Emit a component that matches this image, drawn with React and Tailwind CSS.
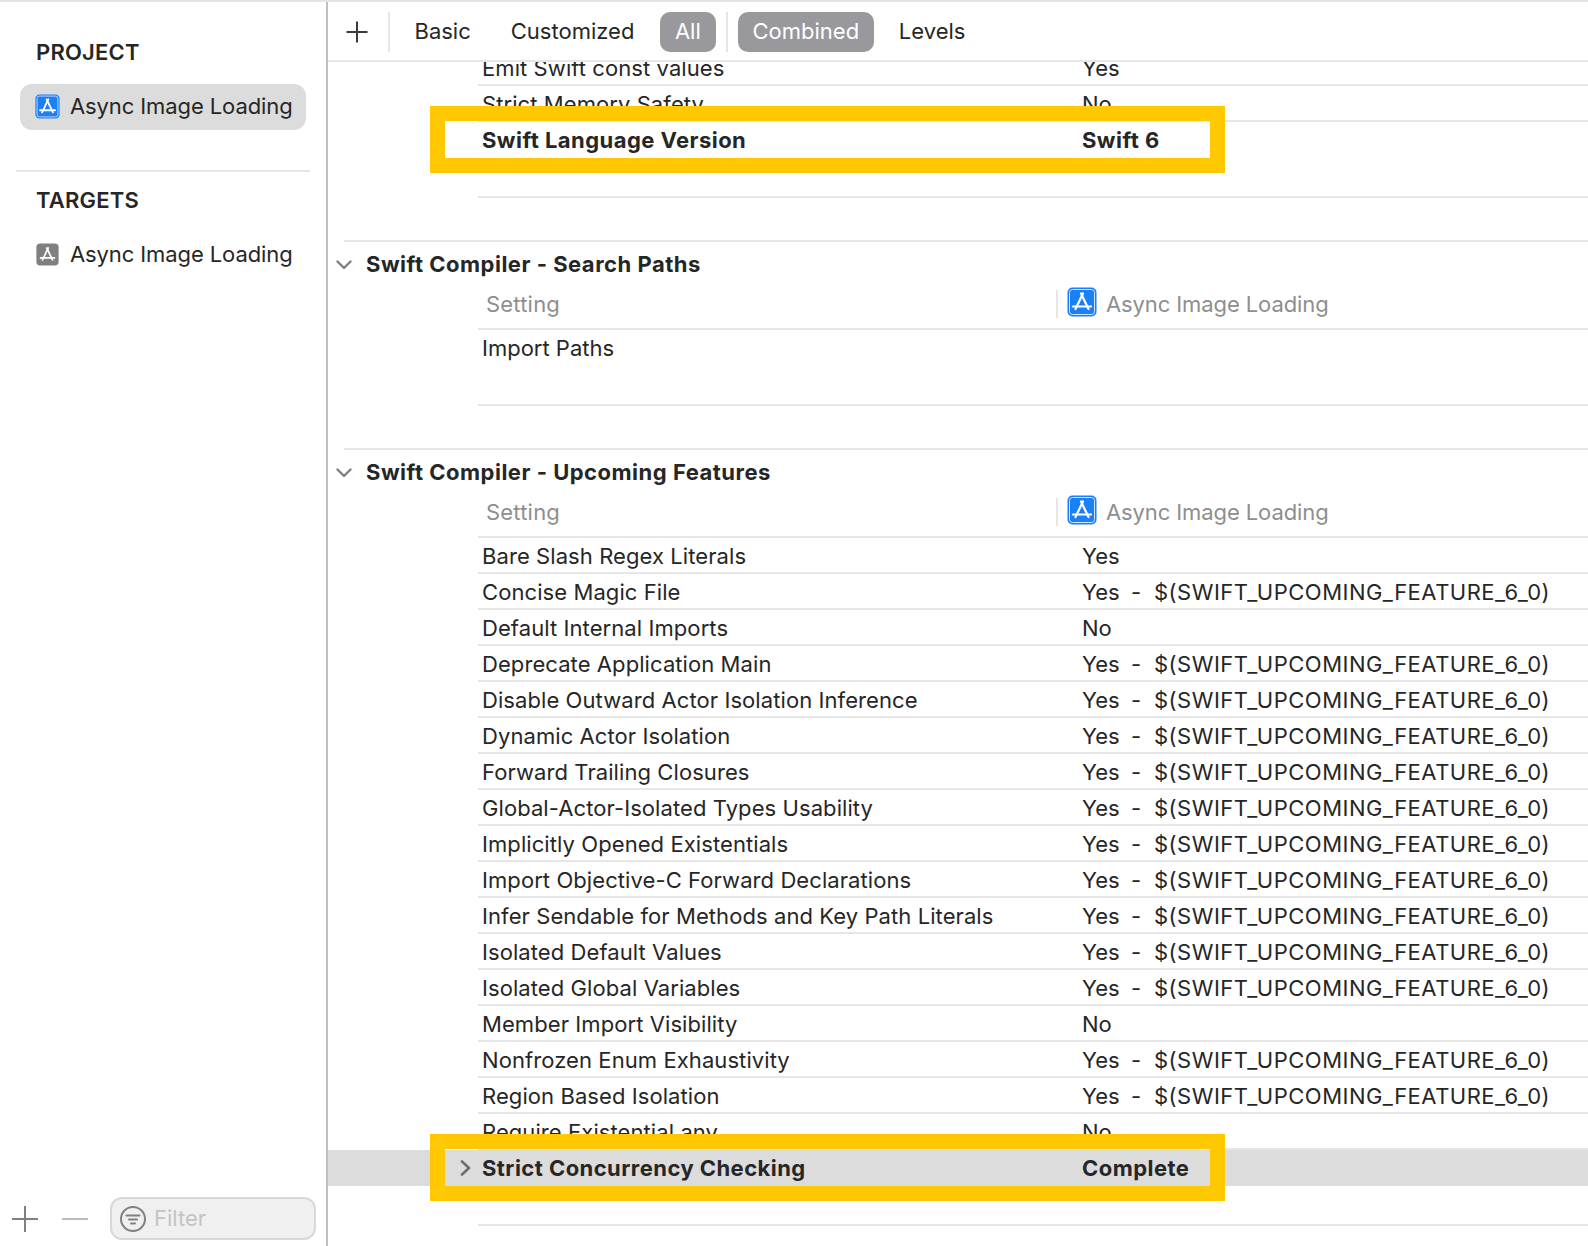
import React from 'react';

const FEATURE = '$(SWIFT_UPCOMING_FEATURE_6_0)';

const upcomingRows = [
  ['Bare Slash Regex Literals', 'Yes', false],
  ['Concise Magic File', 'Yes', true],
  ['Default Internal Imports', 'No', false],
  ['Deprecate Application Main', 'Yes', true],
  ['Disable Outward Actor Isolation Inference', 'Yes', true],
  ['Dynamic Actor Isolation', 'Yes', true],
  ['Forward Trailing Closures', 'Yes', true],
  ['Global-Actor-Isolated Types Usability', 'Yes', true],
  ['Implicitly Opened Existentials', 'Yes', true],
  ['Import Objective-C Forward Declarations', 'Yes', true],
  ['Infer Sendable for Methods and Key Path Literals', 'Yes', true],
  ['Isolated Default Values', 'Yes', true],
  ['Isolated Global Variables', 'Yes', true],
  ['Member Import Visibility', 'No', false],
  ['Nonfrozen Enum Exhaustivity', 'Yes', true],
  ['Region Based Isolation', 'Yes', true],
];

function AppIcon({ gray, size }) {
  return (
    <svg width={size} height={size} viewBox="0 0 30 30" className="shrink-0">
      <rect x="0.5" y="0.5" width="29" height="29" rx="5" fill={gray ? '#808080' : '#1b7ff5'} />
      {!gray && <rect x="2.5" y="2.5" width="25" height="25" rx="3" fill="none" stroke="#d3e6ff" strokeWidth="1" />}
      <g stroke="#fff" strokeWidth="2.2" strokeLinecap="round" fill="none">
        <path d="M14 6.5 L21.5 22" />
        <path d="M16 6.5 L8.5 22" />
        <path d="M6 19.5 H24" />
      </g>
    </svg>
  );
}

function Row({ name, value, feature }) {
  return (
    <div className="ml-[150px] h-[36px] pl-[4px] pt-[2px] flex items-center border-b-2 border-[#e6e6e6]">
      <span className="w-[600px] shrink-0 tracking-[0.08px]">{name}</span>
      <span className="w-[49px] shrink-0">{value}</span>
      {feature && <span className="w-[23px] shrink-0">-</span>}
      {feature && <span className="tracking-[0.49px]">{FEATURE}</span>}
    </div>
  );
}

function Section({ title, children }) {
  return (
    <section className="border-t-2 border-[#e6e6e6] ml-[16px]">
      <div className="h-[44px] flex items-center">
        <svg width="16" height="10" viewBox="0 0 16 10" className="shrink-0 ml-[-8px] mr-[14px] mt-[2px]">
          <path d="M1.5 1.5 L8 8 L14.5 1.5" fill="none" stroke="#808080" strokeWidth="2.4" strokeLinecap="round" strokeLinejoin="round" />
        </svg>
        <h2 className="font-bold tracking-[0.5px]">{title}</h2>
      </div>
      <div className="ml-[134px] h-[44px] pl-[8px] pb-[6px] flex items-center border-b-2 border-[#e6e6e6] text-[#8e8e8e]">
        <span className="w-[570px] shrink-0 tracking-[0.2px]">Setting</span>
        <span className="w-[2px] h-[28px] bg-[#e6e6e6] shrink-0 mr-[9px]"></span>
        <span className="-mt-[4px] shrink-0 flex"><AppIcon size={30} /></span>
        <span className="ml-[9px] tracking-[-0.1px]">Async Image Loading</span>
      </div>
      <div className="-ml-[16px]">{children}</div>
    </section>
  );
}

function Highlight({ className, children }) {
  return (
    <div className={`relative h-[36px] ${className}`}>
      <div className="absolute left-[102px] top-[-16px] w-[795px] h-[67px] border-[15px] border-[#ffc800] pointer-events-none"></div>
      {children}
    </div>
  );
}

export default function App() {
  return (
    <div
      className="w-[1588px] h-[1246px] overflow-hidden bg-white text-[#262626] text-[22px] flex border-t-2 border-[#e3e3e3]"
      style={{ fontFamily: 'Inter, "Noto Sans", sans-serif' }}
    >
      <aside className="w-[328px] shrink-0 border-r-2 border-[#c0c0c0] flex flex-col">
        <h3 className="pl-[36px] mt-[36px] h-[28px] flex items-center font-semibold tracking-[0.2px]">PROJECT</h3>
        <div className="mx-[20px] mt-[18px] h-[46px] pb-[2px] rounded-[12px] bg-[#dcdcdc] flex items-center pl-[15px]">
          <AppIcon size={25} />
          <span className="ml-[10px] tracking-[-0.1px]">Async Image Loading</span>
        </div>
        <div className="mx-[16px] mt-[40px] border-t-2 border-[#e6e6e6]"></div>
        <h3 className="pl-[36px] mt-[14px] h-[28px] flex items-center font-semibold tracking-[0.2px]">TARGETS</h3>
        <div className="mx-[20px] mt-[17px] h-[46px] flex items-center pl-[16px]">
          <AppIcon gray size={23} />
          <span className="ml-[11px] tracking-[-0.1px]">Async Image Loading</span>
        </div>
        <div className="mt-auto h-[43px] mb-[6px] flex items-center pl-[12px]">
          <svg width="26" height="26" viewBox="0 0 26 26" className="shrink-0">
            <path d="M13 0.5 V25.5 M0.5 13 H25.5" stroke="#808080" strokeWidth="2" strokeLinecap="round" />
          </svg>
          <svg width="26" height="26" viewBox="0 0 26 26" className="shrink-0 ml-[24px]">
            <path d="M0.5 13 H25.5" stroke="#bdbdbd" strokeWidth="2" strokeLinecap="round" />
          </svg>
          <div className="ml-[22px] w-[206px] h-[43px] rounded-[12px] border-2 border-[#d8d8d8] bg-[#f0f0f0] flex items-center pl-[8px]">
            <svg width="26" height="26" viewBox="0 0 26 26" className="shrink-0">
              <circle cx="13" cy="13" r="12" fill="none" stroke="#808080" strokeWidth="2" />
              <path d="M6.5 9.5 H19.5 M9 13.5 H17 M11 17.5 H15" stroke="#808080" strokeWidth="2" strokeLinecap="round" />
            </svg>
            <span className="ml-[8px] text-[#c4c4c4]">Filter</span>
          </div>
        </div>
      </aside>

      <main className="flex-1 min-w-0 flex flex-col overflow-hidden">
        <header className="relative z-10 h-[60px] shrink-0 bg-white border-b-2 border-[#e6e6e6] flex items-center">
          <svg width="22" height="22" viewBox="0 0 22 22" className="ml-[18px] mt-[2px] shrink-0">
            <path d="M11 0.5 V21.5 M0.5 11 H21.5" stroke="#3a3a3a" strokeWidth="2" />
          </svg>
          <span className="w-[2px] h-[40px] mt-[2px] bg-[#e6e6e6] ml-[20px] shrink-0"></span>
          <span className="ml-[24.5px]">Basic</span>
          <span className="ml-[40px]">Customized</span>
          <span className="ml-[25.5px] w-[56px] h-[40px] mt-[2px] pb-[2px] rounded-[10px] bg-[#98989d] text-white flex items-center justify-center">All</span>
          <span className="w-[2px] h-[40px] mt-[2px] bg-[#e6e6e6] ml-[10px] shrink-0"></span>
          <span className="ml-[10px] w-[136px] h-[40px] mt-[2px] pb-[2px] rounded-[10px] bg-[#98989d] text-white flex items-center justify-center">Combined</span>
          <span className="ml-[25px]">Levels</span>
        </header>

        <div className="-mt-[12px]">
          <Row name="Emit Swift const values" value="Yes" />
          <Row name="Strict Memory Safety" value="No" />
          <Highlight className="bg-white font-bold">
            <div className="ml-[150px] h-[36px] pl-[4px] flex items-center">
              <span className="w-[600px] shrink-0 tracking-[0.45px]">Swift Language Version</span>
              <span className="tracking-[0.45px]">Swift 6</span>
            </div>
          </Highlight>
          <div className="ml-[150px] h-[40px] border-b-2 border-[#e6e6e6]"></div>
          <div className="h-[42px]"></div>

          <Section title="Swift Compiler - Search Paths">
            <div className="ml-[150px] h-[76px] pl-[4px] pt-[4px] border-b-2 border-[#e6e6e6]">
              <div className="h-[28px] flex items-center">Import Paths</div>
            </div>
          </Section>
          <div className="h-[42px]"></div>

          <Section title="Swift Compiler - Upcoming Features">
            {upcomingRows.map((r) => (
              <Row key={r[0]} name={r[0]} value={r[1]} feature={r[2]} />
            ))}
            <Row name="Require Existential any" value="No" />
            <Highlight className="bg-[#dcdcdc] font-bold">
              <div className="h-[36px] flex items-center">
                <svg width="11" height="16" viewBox="0 0 11 16" className="ml-[132px] mr-[7px] shrink-0">
                  <path d="M2 1.5 L9 8 L2 14.5" fill="none" stroke="#6e6e6e" strokeWidth="2.6" strokeLinecap="round" strokeLinejoin="round" />
                </svg>
                <span className="pl-[4px] w-[604px] shrink-0 tracking-[0.45px]">Strict Concurrency Checking</span>
                <span className="tracking-[0.45px]">Complete</span>
              </div>
            </Highlight>
            <div className="ml-[150px] h-[40px] border-b-2 border-[#e6e6e6]"></div>
          </Section>
        </div>
      </main>
    </div>
  );
}
